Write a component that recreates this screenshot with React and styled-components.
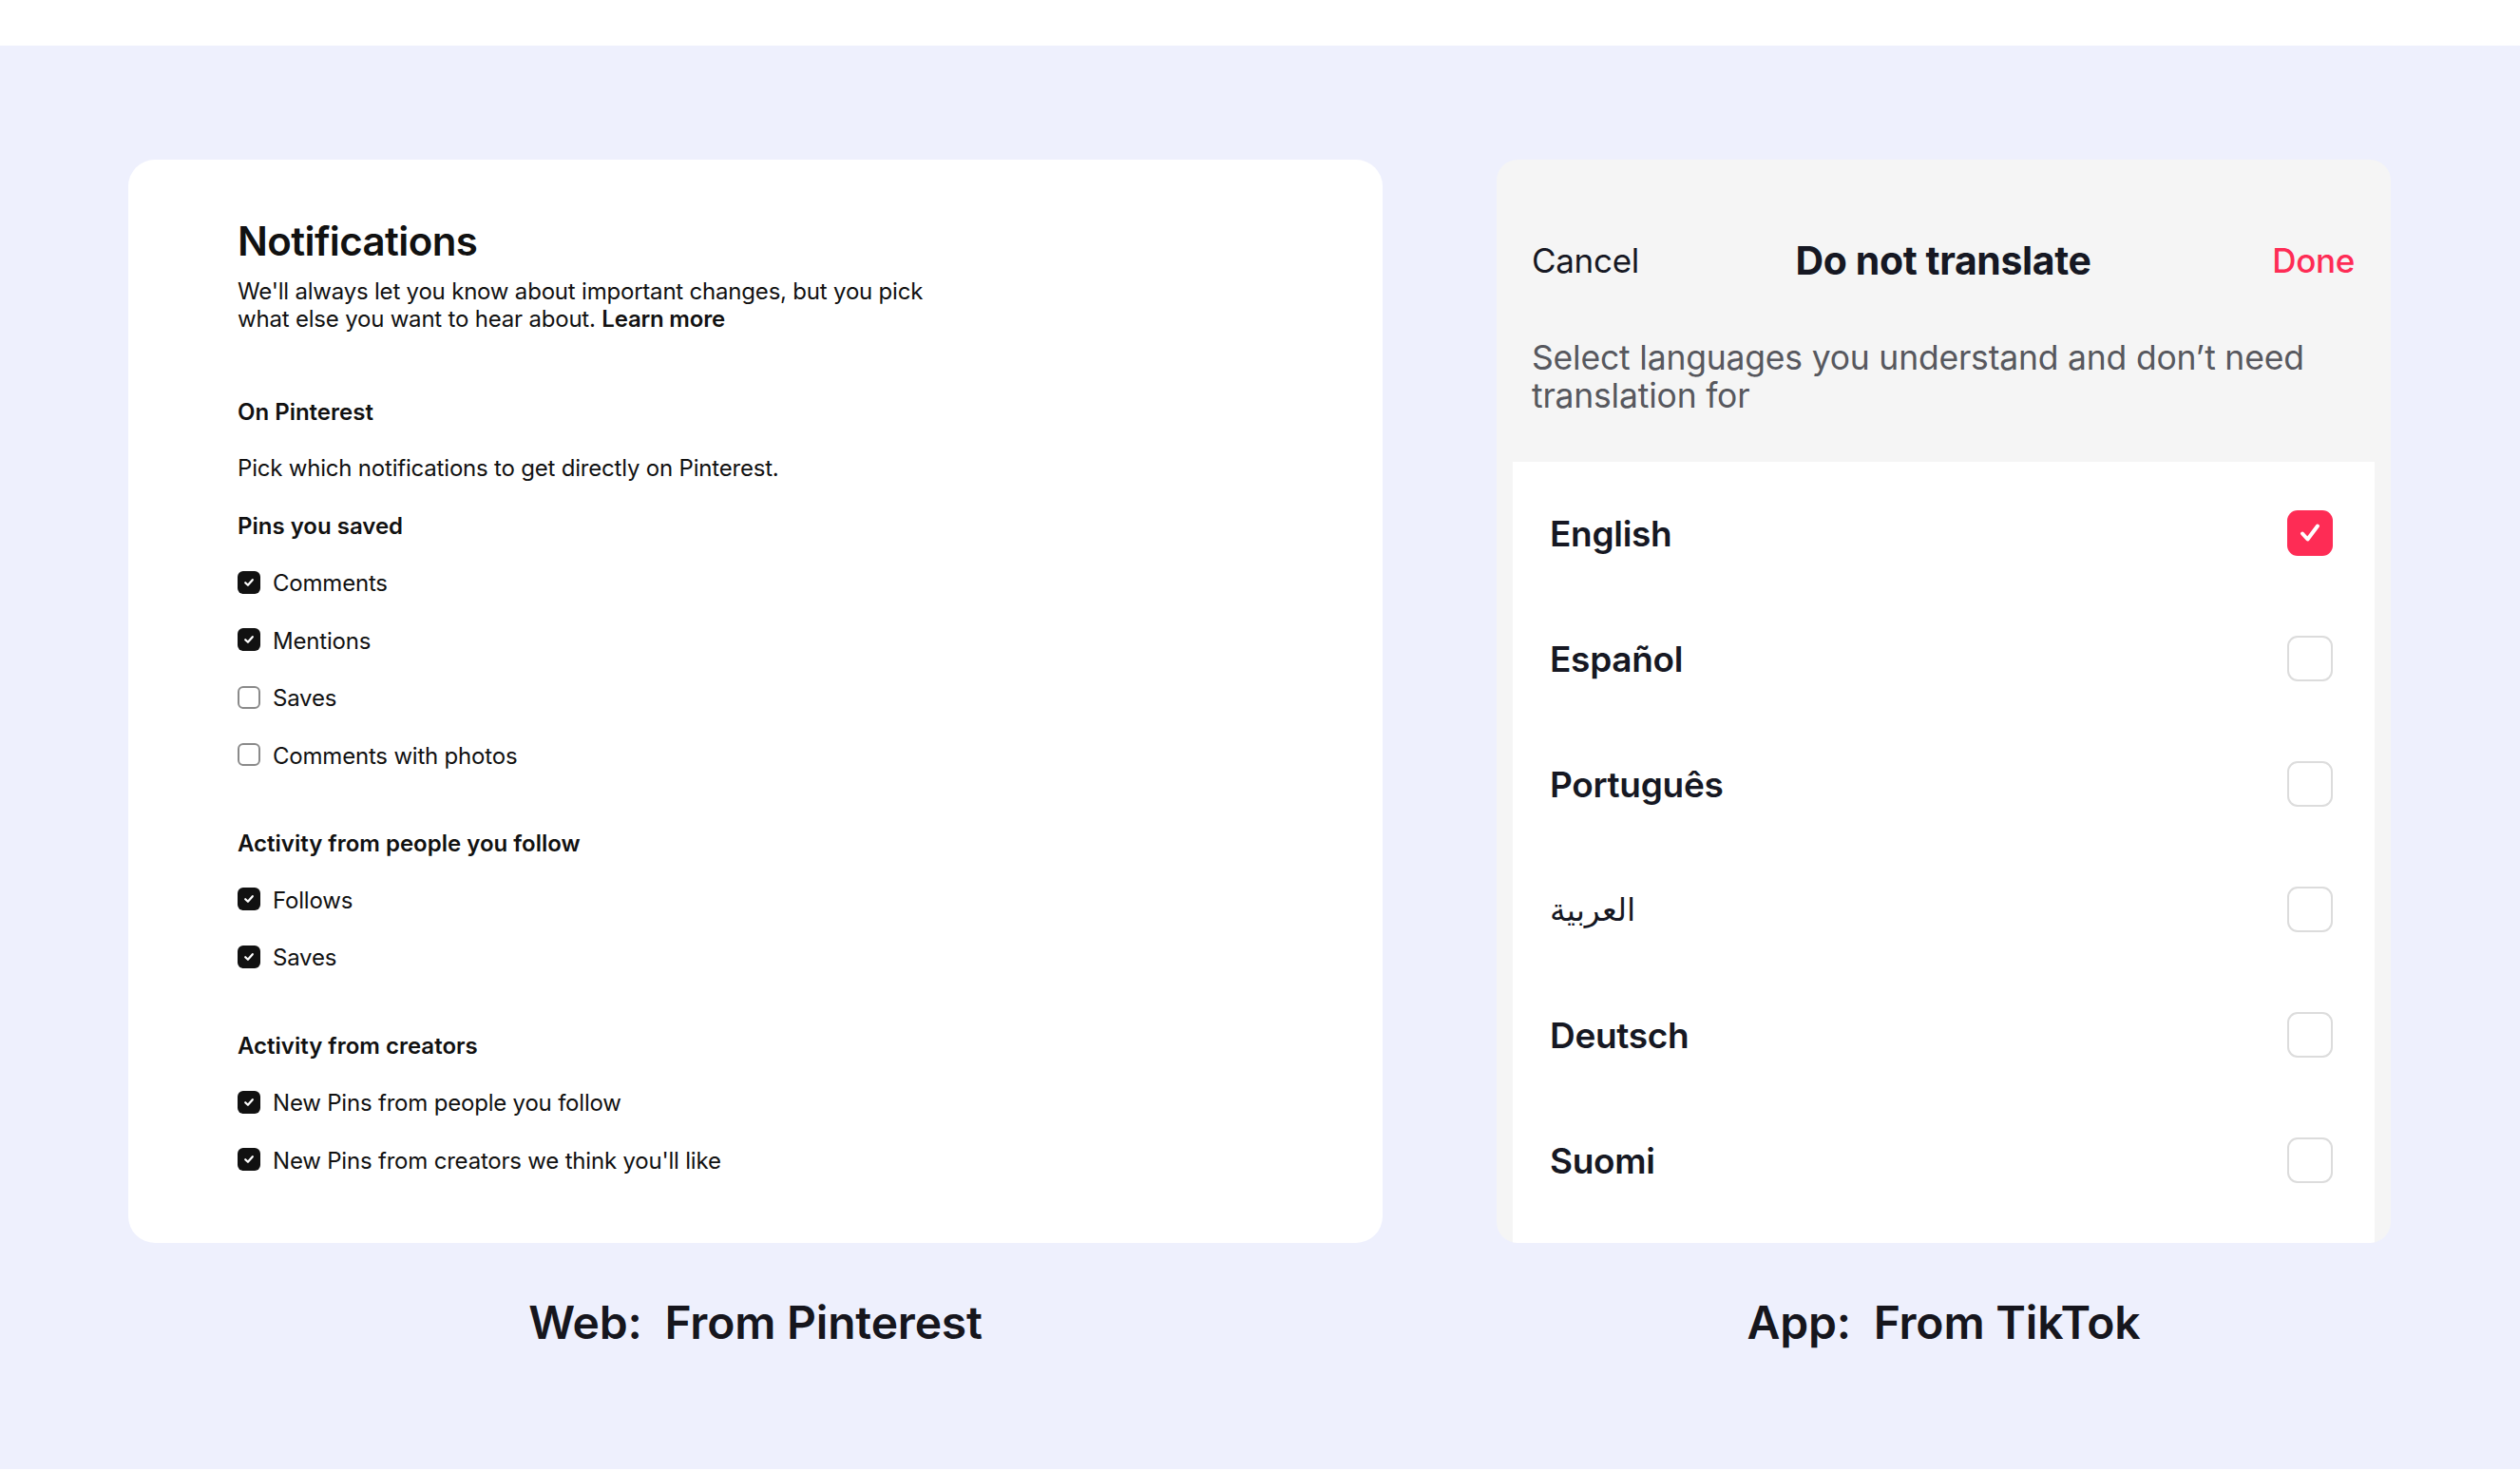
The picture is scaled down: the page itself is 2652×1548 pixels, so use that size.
import React from "react";
import styled, { createGlobalStyle } from "styled-components";

const GlobalStyle = createGlobalStyle`
  body {
    margin: 0;
    background: #ffffff;
    font-family: Inter, "Noto Sans", "DejaVu Sans", sans-serif;
    color: #111111;
  }
`;

const Page = styled.div`
  width: 2652px;
  height: 1548px;
  padding-top: 48px;
  box-sizing: border-box;
`;

const Stage = styled.div`
  height: 1498px;
  background: #eef0fd;
  display: grid;
  grid-template-columns: 1320px 941px;
  column-gap: 120px;
  padding: 120px 0 0 135px;
  box-sizing: border-box;
`;

const Column = styled.div`
  display: flex;
  flex-direction: column;
`;

const Caption = styled.div`
  margin-top: 55px;
  text-align: center;
  font-size: 48px;
  line-height: 58px;
  font-weight: 600;
  color: #16161d;
  white-space: pre;
  letter-spacing: -0.2px;
`;

/* ---------- Pinterest card ---------- */

const WebCard = styled.div`
  height: 1140px;
  background: #ffffff;
  border-radius: 28px;
  padding: 61px 115px 0;
  box-sizing: border-box;
`;

const Title = styled.h1`
  margin: 0;
  font-size: 42px;
  line-height: 50px;
  font-weight: 600;
  letter-spacing: -0.6px;
`;

const Lead = styled.p`
  margin: 13px 0 0;
  font-size: 24px;
  line-height: 29px;
  width: 740px;
  letter-spacing: -0.2px;
  b {
    font-weight: 600;
  }
`;

const Section = styled.div`
  margin-top: ${(p) => p.$top}px;
  display: flex;
  flex-direction: column;
`;

const Heading = styled.div`
  font-size: 24px;
  line-height: 29px;
  font-weight: 600;
`;

const Note = styled.div`
  margin-top: 30px;
  font-size: 24px;
  line-height: 29px;
  letter-spacing: -0.2px;
`;

const SubHeading = styled(Heading)`
  margin-top: 32px;
`;

const Rows = styled.div`
  margin-top: ${(p) => p.$top || 31}px;
  display: flex;
  flex-direction: column;
  gap: 31.5px;
`;

const Row = styled.label`
  display: flex;
  align-items: center;
  gap: 13px;
  font-size: 24px;
  line-height: 29px;
  letter-spacing: -0.2px;
`;

const Box = styled.span`
  width: 24px;
  height: 24px;
  box-sizing: border-box;
  border-radius: 6px;
  margin-top: -2px;
  display: flex;
  align-items: center;
  justify-content: center;
  background: ${(p) => (p.$on ? "#111111" : "#ffffff")};
  border: ${(p) => (p.$on ? "none" : "2px solid #8a8a8a")};
  flex-shrink: 0;
`;

const WebCheck = ({ on, children }) => (
  <Row>
    <Box $on={on}>
      {on && (
        <svg width="14" height="14" viewBox="0 0 14 14">
          <path d="M3.2 7.2 L5.9 9.8 L10.8 4.2" fill="none" stroke="#fff" strokeWidth="2.2" strokeLinecap="round" strokeLinejoin="round" />
        </svg>
      )}
    </Box>
    {children}
  </Row>
);

/* ---------- TikTok card ---------- */

const AppCard = styled.div`
  height: 1140px;
  background: #f5f5f5;
  border-radius: 22px;
  overflow: hidden;
  display: flex;
  flex-direction: column;
`;

const NavBar = styled.div`
  margin-top: 84px;
  padding: 0 38px 0 37px;
  display: grid;
  grid-template-columns: 1fr auto 1fr;
  align-items: center;
  font-size: 35px;
  line-height: 44px;
`;

const NavButton = styled.div`
  color: ${(p) => p.$color || "#161823"};
  font-weight: ${(p) => p.$weight || 400};
  justify-self: ${(p) => p.$align || "start"};
  letter-spacing: -0.3px;
`;

const NavTitle = styled.div`
  font-size: 41px;
  font-weight: 700;
  letter-spacing: -0.4px;
  color: #161823;
`;

const Hint = styled.p`
  margin: 61px 0 0;
  padding: 0 40px 0 37px;
  font-size: 35.5px;
  line-height: 40px;
  color: #57585e;
  letter-spacing: -0.2px;
`;

const List = styled.div`
  flex: 1;
  margin: 49px 17px 0;
  background: #ffffff;
  padding-top: 9px;
  display: flex;
  flex-direction: column;
`;

const LangRow = styled.div`
  height: 132px;
  padding: 0 44px 0 39px;
  display: flex;
  align-items: center;
  justify-content: space-between;
`;

const LangName = styled.span`
  font-weight: ${(p) => (p.$rtl ? 500 : 600)};
  color: #161823;
  letter-spacing: -0.3px;
  font-family: ${(p) => (p.$rtl ? '"DejaVu Sans", sans-serif' : "inherit")};
  font-size: ${(p) => (p.$rtl ? "33px" : "37px")};
`;

const Tick = styled.span`
  width: 48px;
  height: 48px;
  box-sizing: border-box;
  border-radius: 11px;
  display: flex;
  align-items: center;
  justify-content: center;
  background: ${(p) => (p.$on ? "#fe2c55" : "#ffffff")};
  border: ${(p) => (p.$on ? "none" : "2.5px solid #dcdcdc")};
`;

const languages = [
  { name: "English", on: true },
  { name: "Español" },
  { name: "Português" },
  { name: "العربية", rtl: true },
  { name: "Deutsch" },
  { name: "Suomi" },
];

export default function App() {
  return (
    <Page>
      <GlobalStyle />
      <Stage>
        <Column>
          <WebCard>
            <Title>Notifications</Title>
            <Lead>
              We'll always let you know about important changes, but you pick what else you want to hear about.{" "}
              <b>Learn more</b>
            </Lead>

            <Section $top={69}>
              <Heading>On Pinterest</Heading>
              <Note>Pick which notifications to get directly on Pinterest.</Note>
              <SubHeading>Pins you saved</SubHeading>
              <Rows $top={31}>
                <WebCheck on>Comments</WebCheck>
                <WebCheck on>Mentions</WebCheck>
                <WebCheck>Saves</WebCheck>
                <WebCheck>Comments with photos</WebCheck>
              </Rows>
            </Section>

            <Section $top={63}>
              <Heading>Activity from people you follow</Heading>
              <Rows>
                <WebCheck on>Follows</WebCheck>
                <WebCheck on>Saves</WebCheck>
              </Rows>
            </Section>

            <Section $top={64}>
              <Heading>Activity from creators</Heading>
              <Rows>
                <WebCheck on>New Pins from people you follow</WebCheck>
                <WebCheck on>New Pins from creators we think you'll like</WebCheck>
              </Rows>
            </Section>
          </WebCard>
          <Caption>{"Web:  From Pinterest"}</Caption>
        </Column>

        <Column>
          <AppCard>
            <NavBar>
              <NavButton>Cancel</NavButton>
              <NavTitle>Do not translate</NavTitle>
              <NavButton $color="#fe2c55" $weight={500} $align="end">
                Done
              </NavButton>
            </NavBar>
            <Hint>Select languages you understand and don’t need translation for</Hint>
            <List>
              {languages.map((l) => (
                <LangRow key={l.name}>
                  <LangName $rtl={l.rtl} dir={l.rtl ? "rtl" : undefined}>
                    {l.name}
                  </LangName>
                  <Tick $on={l.on}>
                    {l.on && (
                      <svg width="30" height="30" viewBox="0 0 30 30">
                        <path d="M7 15.5 L12.5 21.5 L23 7.5" fill="none" stroke="#fff" strokeWidth="4" strokeLinecap="round" strokeLinejoin="round" />
                      </svg>
                    )}
                  </Tick>
                </LangRow>
              ))}
            </List>
          </AppCard>
          <Caption>{"App:  From TikTok"}</Caption>
        </Column>
      </Stage>
    </Page>
  );
}
